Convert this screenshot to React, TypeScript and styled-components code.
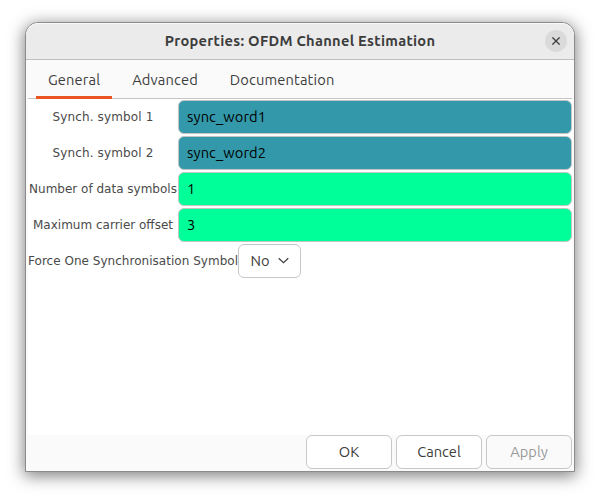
import React from "react";
import styled, { createGlobalStyle } from "styled-components";

const GlobalStyle = createGlobalStyle`
  * { box-sizing: border-box; }
  body { margin: 0; background: #fff; overflow: hidden; }
  button, input { font: inherit; color: inherit; margin: 0; }
`;

const Desktop = styled.div`
  width: 600px;
  height: 500px;
  padding: 22px 25px 28px;
  background: #fff;
  font-family: Ubuntu, "Noto Sans", sans-serif;
  font-size: 14.667px;
  color: #3d3d3d;
`;

const Window = styled.section`
  width: 550px;
  height: 450px;
  display: flex;
  flex-direction: column;
  background: #fafafa;
  border: 1px solid #8b8b8b;
  border-radius: 13px 13px 0 0;
  box-shadow: 0 3px 16px 1px rgba(0, 0, 0, 0.5);
  overflow: hidden;
`;

const TitleBar = styled.header`
  flex: 0 0 37px;
  display: grid;
  grid-template-columns: 29px 1fr 29px;
  align-items: center;
  background: #ebebeb;
  border-bottom: 1px solid #bfbfbf;
  box-shadow: inset 0 1px #f9f9f9;
  border-radius: 12px 12px 0 0;
`;

const Title = styled.h1`
  grid-column: 2;
  margin: 0;
  text-align: center;
  font-size: 14.667px;
  line-height: 20px;
  font-weight: 700;
  letter-spacing: 0.28px;
  white-space: nowrap;
`;

const CloseButton = styled.button`
  width: 22px;
  height: 22px;
  padding: 0;
  display: grid;
  place-items: center;
  border: 0;
  border-radius: 50%;
  background: #dadada;
`;

const Tabs = styled.nav`
  flex: 0 0 39px;
  min-height: 0;
  display: flex;
  margin: 0 2px;
  padding-left: 8px;
  gap: 8px;
  border-bottom: 1px solid #c4c4c4;
`;

const Tab = styled.button<{ $active?: boolean }>`
  height: 39px;
  margin-bottom: -1px;
  padding: 2px 12px 0;
  border: 0;
  border-bottom: 3px solid ${(p) => (p.$active ? "#e95420" : "transparent")};
  background: none;
  letter-spacing: 0.14px;
`;

const Page = styled.main`
  flex: 1;
  margin: 0 2px;
  padding-top: 1px;
  display: flex;
  flex-direction: column;
  gap: 2px;
  background: #fff;
`;

const Row = styled.div`
  height: 34px;
  display: flex;
  align-items: center;
`;

const Label = styled.label<{ $wide?: boolean; $spacing?: number }>`
  flex: 0 0 ${(p) => (p.$wide ? 210 : 150)}px;
  text-align: ${(p) => (p.$wide ? "left" : "center")};
  white-space: nowrap;
  font-family: "DejaVu Sans", sans-serif;
  font-size: 12px;
  letter-spacing: ${(p) => p.$spacing ?? 0}px;
  color: #4a4a4a;
`;

const Entry = styled.input<{ $fill: string }>`
  flex: 1;
  min-width: 0;
  height: 34px;
  padding: 0 8px 1px;
  border: 1px solid #c0c4c3;
  border-radius: 6px;
  background: ${(p) => p.$fill};
  color: #000;
  letter-spacing: 0.1px;
  outline: 0;
`;

const Button = styled.button<{ $width: number; $muted?: boolean }>`
  width: ${(p) => p.$width}px;
  height: 34px;
  padding: 0 0 1px;
  display: flex;
  align-items: center;
  justify-content: center;
  gap: 8px;
  border: 1px solid #c7c7c7;
  border-radius: 6px;
  background: ${(p) => (p.$muted ? "#fafafa" : "#fff")};
  color: ${(p) => (p.$muted ? "#999" : "#3d3d3d")};
`;

const Actions = styled.footer`
  flex: 0 0 36px;
  display: flex;
  justify-content: flex-end;
  gap: 4px;
  padding-right: 2px;
`;

const fields = [
  { label: "Synch. symbol 1", value: "sync_word1", fill: "#3399aa", spacing: 0.15 },
  { label: "Synch. symbol 2", value: "sync_word2", fill: "#3399aa", spacing: 0.15 },
  { label: "Number of data symbols", value: "1", fill: "#00ff99", spacing: 0 },
  { label: "Maximum carrier offset", value: "3", fill: "#00ff99", spacing: 0 },
];

export default function App() {
  return (
    <Desktop>
      <GlobalStyle />
      <Window>
        <TitleBar>
          <Title>Properties: OFDM Channel Estimation</Title>
          <CloseButton aria-label="Close">
            <svg width="8" height="8" viewBox="0 0 8 8" fill="none" stroke="#3d3d3d" strokeWidth="1.3">
              <path d="M.4.4 7.6 7.6M7.6.4.4 7.6" />
            </svg>
          </CloseButton>
        </TitleBar>
        <Tabs>
          <Tab $active>General</Tab>
          <Tab>Advanced</Tab>
          <Tab>Documentation</Tab>
        </Tabs>
        <Page>
          {fields.map((f) => (
            <Row key={f.label}>
              <Label $spacing={f.spacing}>{f.label}</Label>
              <Entry $fill={f.fill} defaultValue={f.value} aria-label={f.label} />
            </Row>
          ))}
          <Row>
            <Label $wide $spacing={0.03}>Force One Synchronisation Symbol</Label>
            <Button $width={63}>
              No
              <svg width="11" height="7" viewBox="0 0 11 7" fill="none" stroke="#3d3d3d" strokeWidth="1.2">
                <path d="m.7 1.3 4.8 4.3 4.8-4.3" />
              </svg>
            </Button>
          </Row>
        </Page>
        <Actions>
          <Button $width={86}>OK</Button>
          <Button $width={86}>Cancel</Button>
          <Button $width={86} $muted>Apply</Button>
        </Actions>
      </Window>
    </Desktop>
  );
}
